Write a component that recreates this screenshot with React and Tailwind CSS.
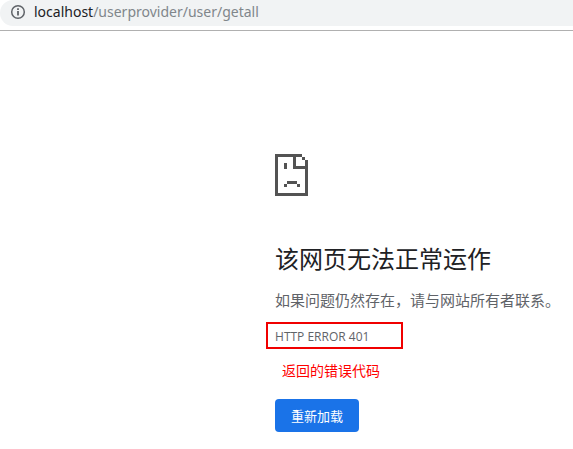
import React from "react";

function SadPage() {
  return (
    <svg className="block h-[42px] w-[33px] text-[#535353]" viewBox="0 0 33 42" fill="currentColor" shapeRendering="crispEdges" aria-hidden="true">
      <path d="M0 0h27v3H3v36h27V6h3v36H0z" />
      <path d="M18 3h3v9h9v3H18z" />
      <path d="M27 3h3v3h-3z" />
      <path d="M9 9h3v6H9z" />
      <path d="M12 27h10v3H12z" />
      <path d="M9 30h3v3H9zM22 30h3v3h-3z" />
    </svg>
  );
}

function InfoIcon() {
  return (
    <svg className="size-4 shrink-0 text-[#5f6368]" viewBox="0 0 16 16" fill="none" stroke="currentColor" aria-hidden="true">
      <circle cx="8" cy="8" r="6.3" strokeWidth="1.5" />
      <path d="M8 7V11.5M8 4.2V6" strokeWidth="1.8" />
    </svg>
  );
}

export default function App() {
  return (
    <div className="min-h-screen overflow-hidden bg-white font-['Noto_Sans','Noto_Sans_CJK_SC',sans-serif] text-[#5f6368]">
      <header className="border-b border-[#b0b0b0] pb-1">
        <div className="flex h-[26px] items-center gap-2 rounded-l-2xl bg-[#f1f3f4] pb-[2px] pl-[10px]">
          <InfoIcon />
          <p className="text-[14px] leading-5 text-[#80868b]">
            <span className="text-[#202124]">localhost</span>/userprovider/user/getall
          </p>
        </div>
      </header>
      <main className="ml-[48%] pt-[123px]">
        <SadPage />
        <h1 className="mt-[48px] whitespace-nowrap text-[24px] leading-[30px] font-normal text-[#202124]">该网页无法正常运作</h1>
        <p className="mt-[14px] whitespace-nowrap text-[15px] leading-6">如果问题仍然存在，请与网站所有者联系。</p>
        <p className="mt-[10px] -ml-[9px] flex h-[27px] w-[137px] items-center border-2 border-[#f00000] pt-[2px] pl-[7px] font-['Open_Sans',sans-serif] text-[12px] leading-5">
          HTTP ERROR 401
        </p>
        <p className="mt-[10px] ml-[7px] text-[14px] leading-6 text-[#ff0000]">返回的错误代码</p>
        <button type="button" className="mt-[16px] block h-[33px] w-[84px] rounded bg-[#1a73e8] text-[13px] leading-5 font-normal text-white">
          重新加载
        </button>
      </main>
    </div>
  );
}
